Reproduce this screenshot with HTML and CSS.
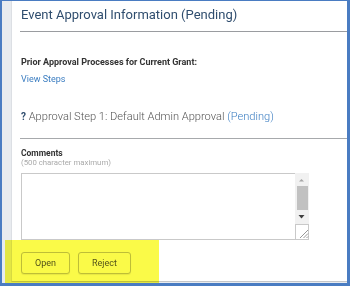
FILE: index.html
```html
<!DOCTYPE html>
<html lang="en">
  <head>
    <meta charset="UTF-8" />
    <title>Event Approval</title>
    <link rel="stylesheet" href="styles.css">
  </head>
  <body>
    <div class="frame">
      <div class="side"></div>
      <article class="panel">
        <h1 class="panel-title">Event Approval Information (Pending)</h1>
        <p class="prior">Prior Approval Processes for Current Grant:</p>
        <a class="link" href="#">View Steps</a>
        <h2 class="step"><span class="step-q">?</span> Approval Step 1: Default Admin Approval <span class="step-status">(Pending)</span></h2>
        <div class="comments">
          <label class="comments-label">Comments</label>
          <p class="comments-hint">(500 character maximum)</p>
          <div class="textbox">
            <textarea class="textbox-input"></textarea>
            <div class="scroll">
              <svg class="scroll-up" width="13" height="12" viewBox="0 0 13 12"><path d="M4 7.5 L6.5 5 L9 7.5 Z" fill="#a6a6a6"/></svg>
              <div class="scroll-thumb"></div>
              <svg class="scroll-down" width="13" height="12" viewBox="0 0 13 12"><path d="M3.5 4 L9.5 4 L6.5 7.5 Z" fill="#404040"/></svg>
              <div class="corner">
                <svg width="13" height="14" viewBox="0 0 13 14"><path d="M4 13 L12 5 M7.5 13 L12 8.5 M10.5 13 L12 11.5" stroke="#8a8a8a" stroke-width="0.9"/></svg>
              </div>
            </div>
          </div>
        </div>
        <div class="actions">
          <button class="btn">Open</button>
          <button class="btn">Reject</button>
        </div>
      </article>
      <div class="highlight"></div>
    </div>
  </body>
</html>
```

FILE: styles.css
```css
* {
  box-sizing: border-box;
}

body {
  margin: 0;
  font-family: Roboto, "Liberation Sans", sans-serif;
}

.frame {
  position: relative;
  display: flex;
  width: 350px;
  height: 286px;
  border: solid #4a7cc2;
  border-width: 1px 3px 3px 2px;
  background: #e8ebef;
}

.side {
  width: 9px;
  flex-shrink: 0;
}

.panel {
  flex: 1;
  background: #fff;
  border-left: 1px solid #dcdfe4;
  border-bottom: 1px solid #c4c6c9;
  margin-bottom: 1px;
  padding-left: 9px;
}

.panel-title {
  margin: 4px 0 0 -1px;
  padding: 0 0 6px 1px;
  font-size: 13px;
  line-height: 20px;
  font-weight: 400;
  color: #2f4d6e;
  border-bottom: 1px solid #9a9ca0;
}

.prior {
  margin: 24px 0 0;
  font-size: 9px;
  line-height: 12px;
  font-weight: 700;
  color: #333;
}

.link {
  display: block;
  margin-top: 5px;
  font-size: 9px;
  line-height: 12px;
  color: #3b7dc1;
  text-decoration: none;
}

.step {
  margin: 24px 0 0 -1px;
  padding: 0 0 13px 1px;
  font-size: 11.1px;
  line-height: 16px;
  font-weight: 300;
  color: #555;
  border-bottom: 1px solid #a7a9ac;
}

.step-q {
  font-size: 10px;
  font-weight: 700;
  color: #2f4d6e;
}

.step-status {
  color: #3b7dc1;
}

.comments-label {
  display: block;
  margin-top: 9px;
  font-size: 8.5px;
  line-height: 10px;
  font-weight: 700;
  color: #333;
}

.comments-hint {
  margin: 0;
  font-size: 7.8px;
  line-height: 10px;
  color: #aaa;
}

.textbox {
  display: flex;
  width: 288px;
  height: 67px;
  margin-top: 5px;
  border: 1px solid #c9c9c9;
  border-right: none;
}

.textbox-input {
  flex: 1;
  border: none;
  resize: none;
  outline: none;
}

.scroll {
  display: flex;
  flex-direction: column;
  width: 14px;
  margin-top: -1px;
  background: #f1f1f1;
}

.scroll-up {
  margin-top: 1px;
}

.scroll-thumb {
  height: 24px;
  margin: 0 1px 0 2px;
  background: #c1c1c1;
}

.scroll-down {
  margin-top: 1px;
}

.corner {
  margin-top: auto;
  height: 15px;
  background: #fff;
  border: 1px solid #c9c9c9;
  border-bottom: none;
}

.corner svg {
  display: block;
}

.actions {
  display: flex;
  gap: 8px;
  margin-top: 12px;
}

.btn {
  height: 22px;
  padding: 0 13px;
  font-family: Roboto, "Liberation Sans", sans-serif;
  font-size: 9px;
  color: #555;
  background: #fff;
  border: 1px solid #c2c2c2;
  border-radius: 3px;
  box-shadow: 0 1px 1px rgba(0, 0, 0, 0.08);
}

.highlight {
  position: absolute;
  left: 3px;
  top: 239px;
  width: 154px;
  height: 43px;
  background: #fafa48;
  mix-blend-mode: multiply;
}
```
